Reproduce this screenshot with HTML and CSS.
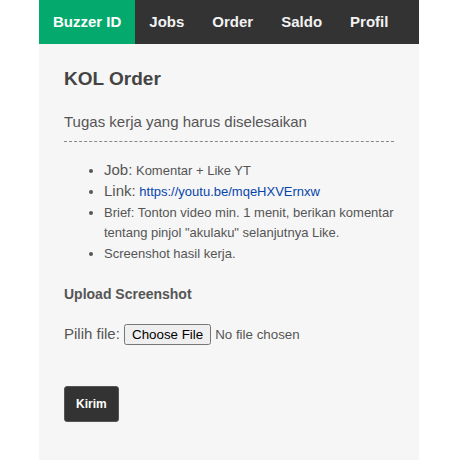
FILE: index.html
```html
<!DOCTYPE html>
<html lang="en">
<head>
  <meta charset="UTF-8" />
  <title>KOL Order - Buzzer ID</title>
  <link rel="stylesheet" href="styles.css">
</head>
<body>

  <div class="page">
    <div class="topnav">
      <a class="active" href="#">Buzzer ID</a>
      <a href="#">Jobs</a>
      <a href="#">Order</a>
      <a href="#">Saldo</a>
      <a href="#">Profil</a>
    </div>

    <div class="content">
      <h3>KOL Order</h3>
      <p class="subtitle">Tugas kerja yang harus diselesaikan</p>

      <ul class="tasks">
        <li><span class="label">Job:</span> Komentar + Like YT</li>
        <li><span class="label">Link:</span> <a href="#">https://youtu.be/mqeHXVErnxw</a></li>
        <li>Brief: Tonton video min. 1 menit, berikan komentar tentang pinjol "akulaku" selanjutnya Like.</li>
        <li>Screenshot hasil kerja.</li>
      </ul>

      <h4>Upload Screenshot</h4>
      <form>
        <label>Pilih file: <input type="file" name="bukti" /></label>
        <button type="button">Kirim</button>
      </form>
    </div>
  </div>

</body>
</html>
```

FILE: styles.css
```css
* {
  box-sizing: border-box;
}

body {
  margin: 0;
  padding: 0;
  font-family: 'Liberation Sans', Arial, sans-serif;
  background: #fff;
  color: #555;
}

.page {
  width: 380px;
  margin-left: 39px;
  min-height: 100vh;
  background: #f6f6f6;
}

.topnav {
  display: flex;
  background-color: #333;
}

.topnav a {
  color: #f2f2f2;
  text-decoration: none;
  font-size: 15px;
  font-weight: bold;
  line-height: 16px;
  padding: 14px;
}

.topnav a.active {
  background-color: #04aa6d;
  color: #fff;
}

.content {
  padding: 24px 25px;
}

.content h3 {
  margin: 0;
  font-size: 19px;
  line-height: 22px;
  color: #444;
}

.subtitle {
  margin: 23px 0 0;
  font-size: 15px;
  line-height: 17px;
  padding-bottom: 11px;
  border-bottom: 1px dashed #888;
}

.tasks {
  margin: 19px 0 0;
  padding-left: 40px;
  font-size: 13px;
  line-height: 20.8px;
}

.tasks .label {
  font-size: 15px;
  line-height: 18px;
}

.tasks a {
  color: #0645ad;
  text-decoration: none;
}

.content h4 {
  margin: 21px 0 0;
  font-size: 14px;
  line-height: 16px;
}

form label {
  display: block;
  margin-top: 22px;
  font-size: 15px;
}

form input[type="file"] {
  font-family: 'Liberation Sans', Arial, sans-serif;
  font-size: 13.33px;
  color: #555;
}

form button {
  display: block;
  margin-top: 41px;
  padding: 10px 11px;
  border: 1px solid #555;
  border-radius: 3px;
  background-color: #333;
  color: #fff;
  font-family: 'Liberation Sans', Arial, sans-serif;
  font-size: 12px;
  font-weight: bold;
  line-height: 14px;
  cursor: pointer;
}
```
